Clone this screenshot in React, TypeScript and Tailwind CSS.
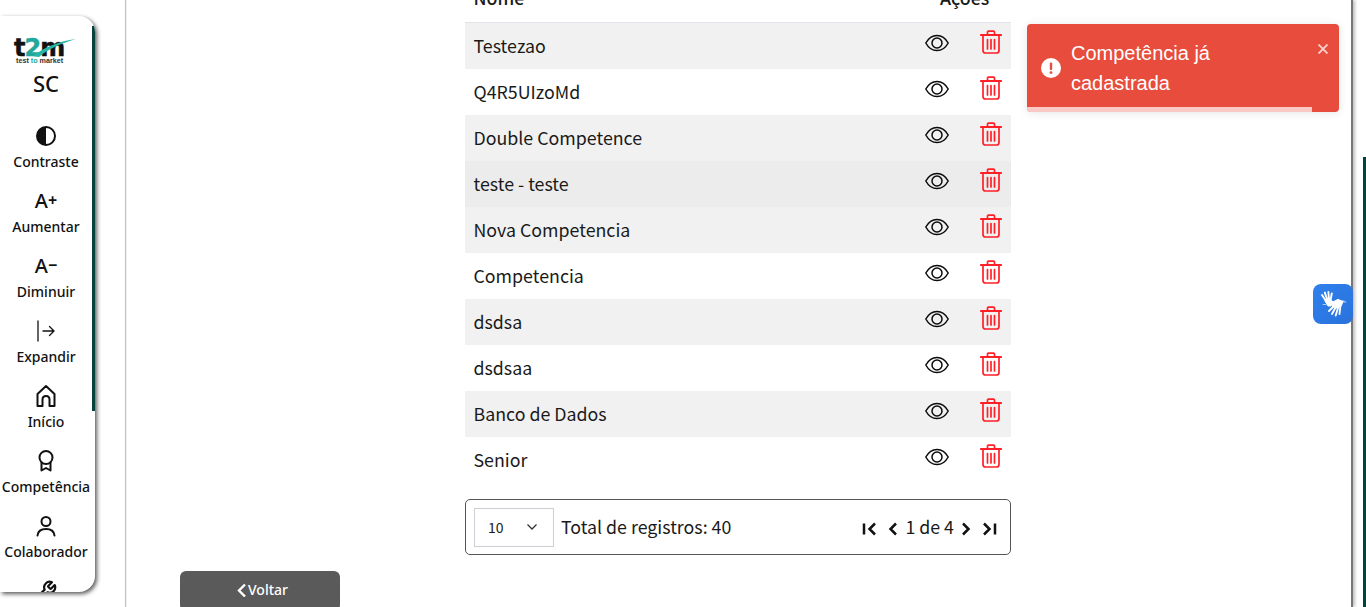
import React from "react";

const rows = [
  { name: "Testezao", bg: "bg-[#f1f1f1]" },
  { name: "Q4R5UIzoMd", bg: "bg-white" },
  { name: "Double Competence", bg: "bg-[#f1f1f1]" },
  { name: "teste - teste", bg: "bg-[#ececec]" },
  { name: "Nova Competencia", bg: "bg-[#f1f1f1]" },
  { name: "Competencia", bg: "bg-white" },
  { name: "dsdsa", bg: "bg-[#f1f1f1]" },
  { name: "dsdsaa", bg: "bg-white" },
  { name: "Banco de Dados", bg: "bg-[#f1f1f1]" },
  { name: "Senior", bg: "bg-white" },
];

const Eye = () => (
  <svg width="24" height="24" viewBox="0 0 24 24" fill="none" stroke="#0a0a0a" strokeWidth="1.5">
    <path d="M0.8 12C3.6 6.9 7.4 4.4 12 4.4S20.4 6.9 23.2 12C20.4 17.1 16.6 19.6 12 19.6S3.6 17.1 0.8 12Z" />
    <circle cx="12" cy="12" r="5" />
  </svg>
);

const Trash = () => (
  <svg className="-mt-[1px]" width="22" height="24" viewBox="0 0 22 24" fill="none" stroke="#ff2028" strokeWidth="1.7" strokeLinejoin="round" strokeLinecap="round">
    <path d="M1 5H21" strokeWidth="2.2" />
    <path d="M7.5 4.5V2.2C7.5 1.6 8 1.2 8.5 1.2H13.5C14 1.2 14.5 1.6 14.5 2.2V4.5" />
    <path d="M3 5.5V20.5C3 22 4 23 5.5 23H16.5C18 23 19 22 19 20.5V5.5" />
    <path d="M7.5 9.5V19M11 9.5V19M14.5 9.5V19" />
  </svg>
);

const NavItem = ({ label, icon }: { label: string; icon: React.ReactNode }) => (
  <div className="h-[65px] shrink-0 flex flex-col items-center">
    <div className="h-[26px] w-full flex items-center justify-center">{icon}</div>
    <div className="h-[26px] flex items-center text-[14px] font-medium text-[#111] whitespace-nowrap leading-none">{label}</div>
  </div>
);

const strokeIcon = {
  fill: "none",
  stroke: "#111",
  strokeWidth: 2,
  strokeLinecap: "round" as const,
  strokeLinejoin: "round" as const,
};

export default function App() {
  return (
    <div className="h-[607px] w-[1366px] overflow-hidden flex bg-white font-['Noto_Sans_CJK_SC','Noto_Sans',sans-serif] text-[#1a1a1a]">
      {/* Sidebar column */}
      <div className="w-[125px] shrink-0 pt-[16px]">
        <aside className="relative w-[95px] h-[576px] pr-[3px] bg-white rounded-r-[16px] shadow-[2px_2px_4px_rgba(0,0,0,0.65)] overflow-hidden font-['Noto_Sans',sans-serif]">
          <div className="absolute right-0 top-[10px] h-[385px] w-[3px] bg-[#04423c]" />
          <div className="flex flex-col items-center pt-[19px]">
            <div className="relative h-[32px] w-[64px]">
              <div className="absolute left-[0px] top-[4px] flex items-baseline font-['DejaVu_Sans',sans-serif] font-bold text-[24px] leading-[19px] tracking-[-1px] text-[#111] [-webkit-text-stroke:0.5px_#111]">
                <span>t</span>
                <span className="text-[#1fa89b] [-webkit-text-stroke:0.5px_#1fa89b]">2</span>
                <span>m</span>
              </div>
              <svg className="absolute left-[19px] top-[4px]" width="43" height="18" viewBox="0 0 43 18">
                <path d="M0 17C12 8 26 2 43 0C30 4 16 9 6 18Z" fill="#27b5a6" />
              </svg>
              <div className="absolute left-[2px] top-[23px] text-[7.2px] font-bold leading-[6px] whitespace-nowrap font-['Liberation_Sans',sans-serif] text-[#333]">
                test <span className="text-[#1fa89b]">to</span> market
              </div>
            </div>
            <div className="h-[32px] text-[22px] leading-[32px] font-medium text-[#111]">SC</div>
            <div className="h-[24px] shrink-0" />
            <NavItem
              label="Contraste"
              icon={
                <svg width="22" height="22" viewBox="0 0 22 22">
                  <circle cx="11" cy="11" r="9" fill="#fff" stroke="#111" strokeWidth="2" />
                  <path d="M11 2A9 9 0 0 0 11 20Z" fill="#111" />
                </svg>
              }
            />
            <NavItem label="Aumentar" icon={<span className="text-[20px] font-medium leading-none text-[#111]">A<span className="text-[16px] font-bold align-[2px]">+</span></span>} />
            <NavItem label="Diminuir" icon={<span className="text-[20px] font-medium leading-none text-[#111]">A<span className="text-[16px] font-bold align-[2px]">−</span></span>} />
            <NavItem
              label="Expandir"
              icon={
                <svg width="20" height="22" viewBox="0 0 20 22" {...strokeIcon} strokeWidth={1.3}>
                  <path d="M2 1V21M7 11H18M13.5 6.5L18 11L13.5 15.5" />
                </svg>
              }
            />
            <NavItem
              label="Início"
              icon={
                <svg width="22" height="24" viewBox="0 0 22 24" {...strokeIcon}>
                  <path d="M2.5 22V10L11 2L19.5 10V22H14.5V15.5C14.5 13.2 13 12 11 12S7.5 13.2 7.5 15.5V22Z" />
                </svg>
              }
            />
            <NavItem
              label="Competência"
              icon={
                <svg width="20" height="24" viewBox="0 0 20 24" {...strokeIcon}>
                  <circle cx="10" cy="8.5" r="6.5" />
                  <path d="M5.5 13.5V21.5L10 19L14.5 21.5V13.5" />
                </svg>
              }
            />
            <NavItem
              label="Colaborador"
              icon={
                <svg width="22" height="24" viewBox="0 0 22 24" {...strokeIcon}>
                  <circle cx="11" cy="7.5" r="4.5" />
                  <path d="M2.5 21.5C3 17 6.5 15 11 15S19 17 19.5 21.5" />
                </svg>
              }
            />
            <div className="h-[26px] w-full flex items-center justify-center">
              <svg width="22" height="22" viewBox="0 0 24 24" {...strokeIcon} strokeWidth={2.4}>
                <path d="M14.7 6.3a1 1 0 0 0 0 1.4l1.6 1.6a1 1 0 0 0 1.4 0l3.77-3.77a6 6 0 0 1-7.94 7.94l-6.91 6.91a2.12 2.12 0 0 1-3-3l6.91-6.91a6 6 0 0 1 7.94-7.94l-3.76 3.76z" />
              </svg>
            </div>
          </div>
        </aside>
      </div>

      {/* Main panel */}
      <main className="relative w-[1228px] shrink-0 border-l border-l-[#c4c4c4] border-r-2 border-r-[#777] shadow-[2px_0_3px_rgba(0,0,0,0.25),inset_1px_0_0_#eeeeee]">
        <div className="ml-[339px] w-[546px] -mt-[23px] text-[17.8px]">
          <div className="h-[46px] flex items-center border-b border-b-[#e3e3ea] font-medium pb-[4px]">
            <div className="flex-1 pl-[8.5px]">Nome</div>
            <div className="w-[71px]">Ações</div>
          </div>
          {rows.map((r) => (
            <div key={r.name} className={`h-[46px] flex items-center ${r.bg}`}>
              <div className="flex-1 pl-[8.5px] leading-[46px] pb-[2px]">{r.name}</div>
              <div className="w-[86px] flex items-center justify-between pb-[7px] pr-[9px]">
                <Eye />
                <Trash />
              </div>
            </div>
          ))}
          <div className="mt-[16px] h-[56px] border border-[#555] rounded-[5px] flex items-center pl-[8px] pr-[13px]">
            <div className="w-[80px] h-[39px] border border-[#ccd0d4] flex items-center justify-between pl-[13px] pr-[14px] text-[14px]">
              <span>10</span>
              <svg width="14" height="14" viewBox="0 0 14 14" fill="none" stroke="#333" strokeWidth="1.3">
                <path d="M2.5 4.5L7 9L11.5 4.5" />
              </svg>
            </div>
            <span className="ml-[7px] pb-[2px]">Total de registros: 40</span>
            <div className="ml-auto flex items-center">
              <svg className="mt-[3px]" width="16" height="16" viewBox="0 0 16 16" fill="none" stroke="#111" strokeWidth="2.5">
                <path d="M4 2.5V13.5M15 2.5L9.5 8L15 13.5" />
              </svg>
              <svg className="ml-[11px] mt-[3px]" width="12" height="16" viewBox="0 0 12 16" fill="none" stroke="#111" strokeWidth="2.5">
                <path d="M9 2.5L3.5 8L9 13.5" />
              </svg>
              <span className="ml-[6px] pb-[2px]">1 de 4</span>
              <svg className="ml-[6px] mt-[3px]" width="12" height="16" viewBox="0 0 12 16" fill="none" stroke="#111" strokeWidth="2.5">
                <path d="M3 2.5L8.5 8L3 13.5" />
              </svg>
              <svg className="ml-[9px] mt-[3px]" width="16" height="16" viewBox="0 0 16 16" fill="none" stroke="#111" strokeWidth="2.5">
                <path d="M3 2.5L8.5 8L3 13.5M14 2.5V13.5" />
              </svg>
            </div>
          </div>
        </div>
        <div className="ml-[54px] mt-[16px] w-[160px] h-[40px] rounded-[6px] bg-[#5a5a5a] text-white flex items-start pt-[8px] justify-center text-[14px] font-['Noto_Sans',sans-serif] font-medium">
          <svg className="mt-[4px] ml-[4px] mr-[1px]" width="11" height="14" viewBox="0 0 11 14" fill="none" stroke="#fff" strokeWidth="2.4">
            <path d="M9 1.5L3 7.5L9 13.5" />
          </svg>
          Voltar
        </div>

        {/* Toast */}
        <div className="absolute left-[901px] top-[24px] w-[312px] h-[88px] rounded-[4px] bg-[#e74c3c] shadow-[0_1px_10px_rgba(0,0,0,0.1)] overflow-hidden text-white font-['Liberation_Sans',sans-serif]">
          <svg className="absolute left-[14px] top-[34px]" width="20" height="20" viewBox="0 0 20 20">
            <circle cx="10" cy="10" r="10" fill="#fff" />
            <rect x="8.8" y="4.4" width="2.4" height="7.6" rx="1" fill="#e74c3c" />
            <circle cx="10" cy="14.6" r="1.4" fill="#e74c3c" />
          </svg>
          <div className="absolute left-[44px] top-[14px] w-[200px] text-[20px] leading-[30px]">Competência já cadastrada</div>
          <svg className="absolute left-[291px] top-[20px]" width="10" height="10" viewBox="0 0 10 10" stroke="#fff" strokeOpacity="0.75" strokeWidth="1.8">
            <path d="M0.5 0.5L9.5 9.5M9.5 0.5L0.5 9.5" />
          </svg>
          <div className="absolute left-0 bottom-0 h-[5px] w-[285px] bg-white/70" />
        </div>

        {/* VLibras */}
        <div className="absolute left-[1187px] top-[284px] w-[40px] h-[40px] rounded-[8px] bg-[linear-gradient(135deg,#2f80ed,#2a72dc)] flex items-center justify-center">
          <svg width="28" height="28" viewBox="0 0 28 28" fill="#fff" stroke="#fff" strokeLinecap="round" strokeLinejoin="round">
            <path d="M3 5L7 11M5.8 2.6L8.4 10M9.4 2L10 10M12.8 3.5L11.5 10.5" strokeWidth="1.9" />
            <path d="M6 11L9 16L12 16L14 11.5L10 9.5Z" strokeWidth="1" />
            <path d="M14 12L19 9.5L24 11.5L22 16L18 18L13.5 16.5Z" strokeWidth="1.2" />
            <path d="M10 21L14.5 16.5M13 24L16.5 17.5M16.7 25.5L19 18M20.5 24L21.3 17" strokeWidth="1.9" />
            <path d="M24 11L26.5 12" strokeWidth="1.4" strokeOpacity="0.5" />
            <path d="M4 14.5L7 14.5" strokeWidth="1" strokeOpacity="0.6" />
          </svg>
        </div>
      </main>

      {/* Outer scrollbar strip */}
      <div className="flex-1 flex justify-end pt-[157px]">
        <div className="w-[3px] h-[450px] bg-[#04423c]" />
      </div>
    </div>
  );
}
